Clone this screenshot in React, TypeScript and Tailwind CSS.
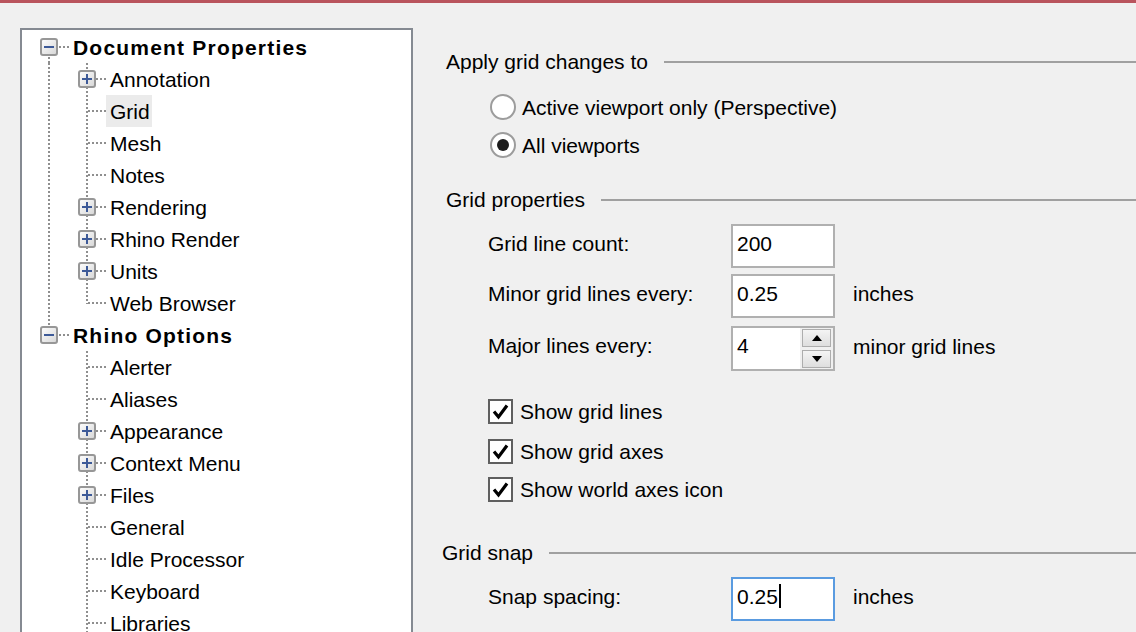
import React from "react";

type Row = {
  label: string;
  level: 0 | 1;
  exp?: "+" | "-";
  root?: "full" | "below" | "above" | "none";
  child?: "full" | "top" | "none";
  selected?: boolean;
};

const rows: Row[] = [
  { label: "Document Properties", level: 0, exp: "-", root: "below" },
  { label: "Annotation", level: 1, exp: "+", root: "full", child: "full" },
  { label: "Grid", level: 1, root: "full", child: "full", selected: true },
  { label: "Mesh", level: 1, root: "full", child: "full" },
  { label: "Notes", level: 1, root: "full", child: "full" },
  { label: "Rendering", level: 1, exp: "+", root: "full", child: "full" },
  { label: "Rhino Render", level: 1, exp: "+", root: "full", child: "full" },
  { label: "Units", level: 1, exp: "+", root: "full", child: "full" },
  { label: "Web Browser", level: 1, root: "full", child: "top" },
  { label: "Rhino Options", level: 0, exp: "-", root: "above" },
  { label: "Alerter", level: 1, root: "none", child: "full" },
  { label: "Aliases", level: 1, root: "none", child: "full" },
  { label: "Appearance", level: 1, exp: "+", root: "none", child: "full" },
  { label: "Context Menu", level: 1, exp: "+", root: "none", child: "full" },
  { label: "Files", level: 1, exp: "+", root: "none", child: "full" },
  { label: "General", level: 1, root: "none", child: "full" },
  { label: "Idle Processor", level: 1, root: "none", child: "full" },
  { label: "Keyboard", level: 1, root: "none", child: "full" },
  { label: "Libraries", level: 1, root: "none", child: "full" },
];

const DOT = "#8f8f8f";

function Expander({ x, sign }: { x: number; sign: "+" | "-" }) {
  return (
    <g>
      <rect x={x} y={8} width={16} height={16} rx={2} fill="url(#expGrad)" stroke="#979797" strokeWidth={2} />
      <line x1={x + 3} y1={16} x2={x + 13} y2={16} stroke="#3d5a98" strokeWidth={2} />
      {sign === "+" && <line x1={x + 8} y1={11} x2={x + 8} y2={21} stroke="#3d5a98" strokeWidth={2} />}
    </g>
  );
}

function Gutter({ row }: { row: Row }) {
  const w = row.level === 0 ? 47 : 84;
  const rootX = 27;
  const childX = 65;
  return (
    <svg width={w} height={32} className="shrink-0 block">
      <defs>
        <linearGradient id="expGrad" x1="0" y1="0" x2="1" y2="1">
          <stop offset="0" stopColor="#ffffff" />
          <stop offset="1" stopColor="#d6d6d6" />
        </linearGradient>
      </defs>
      {row.root === "full" && (
        <line x1={rootX} y1={0} x2={rootX} y2={32} stroke={DOT} strokeWidth={2} strokeDasharray="2 2" />
      )}
      {row.root === "below" && (
        <line x1={rootX} y1={26} x2={rootX} y2={32} stroke={DOT} strokeWidth={2} strokeDasharray="2 2" />
      )}
      {row.root === "above" && (
        <line x1={rootX} y1={0} x2={rootX} y2={8} stroke={DOT} strokeWidth={2} strokeDasharray="2 2" />
      )}
      {row.level === 0 && (
        <>
          <line x1={37} y1={16} x2={47} y2={16} stroke={DOT} strokeWidth={2} strokeDasharray="2 2" />
          <Expander x={19} sign={row.exp ?? "-"} />
        </>
      )}
      {row.level === 1 && (
        <>
          {row.child === "full" && (
            <line x1={childX} y1={0} x2={childX} y2={32} stroke={DOT} strokeWidth={2} strokeDasharray="2 2" />
          )}
          {row.child === "top" && (
            <line x1={childX} y1={0} x2={childX} y2={17} stroke={DOT} strokeWidth={2} strokeDasharray="2 2" />
          )}
          <line x1={childX + 1} y1={16} x2={84} y2={16} stroke={DOT} strokeWidth={2} strokeDasharray="2 2" />
          {row.exp && <Expander x={57} sign={row.exp} />}
        </>
      )}
    </svg>
  );
}

function TreeRow({ row }: { row: Row }) {
  return (
    <div className="flex h-[32px] items-center">
      <Gutter row={row} />
      <span
        className={
          row.level === 0
            ? "pl-[4px] pr-[2px] font-bold tracking-[1.2px] h-[32px] flex items-center"
            : row.selected
            ? "pl-[4px] pr-[2px] h-[32px] flex items-center bg-[#ebebeb]"
            : "pl-[4px] pr-[2px] h-[32px] flex items-center"
        }
      >
        {row.label}
      </span>
    </div>
  );
}

function Header({ label, pl }: { label: string; pl: string }) {
  return (
    <div className={`flex h-[32px] items-center ${pl}`}>
      <span className="pb-[2px]">{label}</span>
      <div className="ml-[16px] h-[2px] flex-1 bg-[#a0a0a0]" />
    </div>
  );
}

function Radio({ checked, label }: { checked?: boolean; label: string }) {
  return (
    <div className="flex h-[38px] items-center pl-[50px]">
      <div className="flex h-[26px] w-[26px] items-center justify-center rounded-full border-2 border-[#9c9c9c] bg-white">
        {checked && <div className="h-[12px] w-[12px] rounded-full bg-[#1c1c1c]" />}
      </div>
      <span className="ml-[6px]">{label}</span>
    </div>
  );
}

function Check({ label, mt }: { label: string; mt: string }) {
  return (
    <div className={`flex h-[38px] items-center pl-[48px] ${mt}`}>
      <div className="flex h-[25px] w-[25px] items-center justify-center border-2 border-[#5f5f5f] bg-white">
        <svg width="19" height="19" viewBox="0 0 19 19">
          <path d="M3 9.5 L7.5 15 L16 3.5" fill="none" stroke="#000" strokeWidth={3.2} strokeLinejoin="miter" />
        </svg>
      </div>
      <span className="ml-[7px]">{label}</span>
    </div>
  );
}

function Field({
  label,
  value,
  unit,
  mt,
  spin,
  focus,
}: {
  label: string;
  value: string;
  unit?: string;
  mt: string;
  spin?: boolean;
  focus?: boolean;
}) {
  return (
    <div className={`flex items-center pl-[48px] ${mt}`}>
      <span className="w-[243px] shrink-0 pb-[6px]">{label}</span>
      <div
        className={
          focus
            ? "flex h-[44px] w-[104px] shrink-0 items-center border-2 border-[#5a9be0] bg-white pl-[4px] pb-[6px]"
            : spin
            ? "flex h-[45px] w-[104px] shrink-0 items-center border-2 border-[#b0b0b0] bg-white pl-[4px]"
            : "flex h-[44px] w-[104px] shrink-0 items-center border-2 border-[#b0b0b0] bg-white pl-[4px] pb-[6px]"
        }
      >
        <span className={spin ? "flex flex-1 items-center pb-[6px]" : "flex flex-1 items-center"}>
          {value}
          {focus && <span className="ml-[1px] inline-block h-[24px] w-[2px] bg-black" />}
        </span>
        {spin && (
          <div className="flex h-full w-[33px] flex-col items-center justify-center gap-[3px] bg-[#f0f0f0]">
            <div className="flex h-[18px] w-[29px] items-center justify-center border border-[#adadad] bg-gradient-to-b from-[#f4f4f4] to-[#dedede]">
              <svg width="10" height="6" viewBox="0 0 10 6">
                <path d="M0 6 L5 0 L10 6 Z" fill="#000" />
              </svg>
            </div>
            <div className="flex h-[18px] w-[29px] items-center justify-center border border-[#adadad] bg-gradient-to-b from-[#f4f4f4] to-[#dedede]">
              <svg width="10" height="6" viewBox="0 0 10 6">
                <path d="M0 0 L10 0 L5 6 Z" fill="#000" />
              </svg>
            </div>
          </div>
        )}
      </div>
      {unit && <span className="ml-[18px] pb-[5px]">{unit}</span>}
    </div>
  );
}

export default function App() {
  return (
    <div className="h-[632px] w-[1136px] overflow-hidden bg-[#f0f0f0] font-['Liberation_Sans',Arial,sans-serif] text-[21px] leading-none text-black">
      <div className="h-[3px] bg-[#b9545d]" />
      <div className="flex">
        <div className="w-[440px] shrink-0 pl-[20px] pt-[25px]">
          <div className="h-[700px] w-[393px] border-2 border-[#858a92] bg-white pt-[1px]">
            {rows.map((r) => (
              <TreeRow key={r.label} row={r} />
            ))}
          </div>
        </div>
        <div className="flex min-w-0 flex-1 flex-col">
          <div className="mt-[43px]">
            <Header label="Apply grid changes to" pl="pl-[6px]" />
          </div>
          <div className="mt-[10px]">
            <Radio label="Active viewport only (Perspective)" />
            <Radio label="All viewports" checked />
          </div>
          <div className="mt-[20px]">
            <Header label="Grid properties" pl="pl-[6px]" />
          </div>
          <Field label="Grid line count:" value="200" mt="mt-[8px]" />
          <Field label="Minor grid lines every:" value="0.25" unit="inches" mt="mt-[6px]" />
          <Field label="Major lines every:" value="4" unit="minor grid lines" mt="mt-[8px]" spin />
          <Check label="Show grid lines" mt="mt-[21px]" />
          <Check label="Show grid axes" mt="mt-[2px]" />
          <Check label="Show world axes icon" mt="mt-0" />
          <div className="mt-[29px]">
            <Header label="Grid snap" pl="pl-[2px]" />
          </div>
          <Field label="Snap spacing:" value="0.25" unit="inches" mt="mt-[8px]" focus />
        </div>
      </div>
    </div>
  );
}
